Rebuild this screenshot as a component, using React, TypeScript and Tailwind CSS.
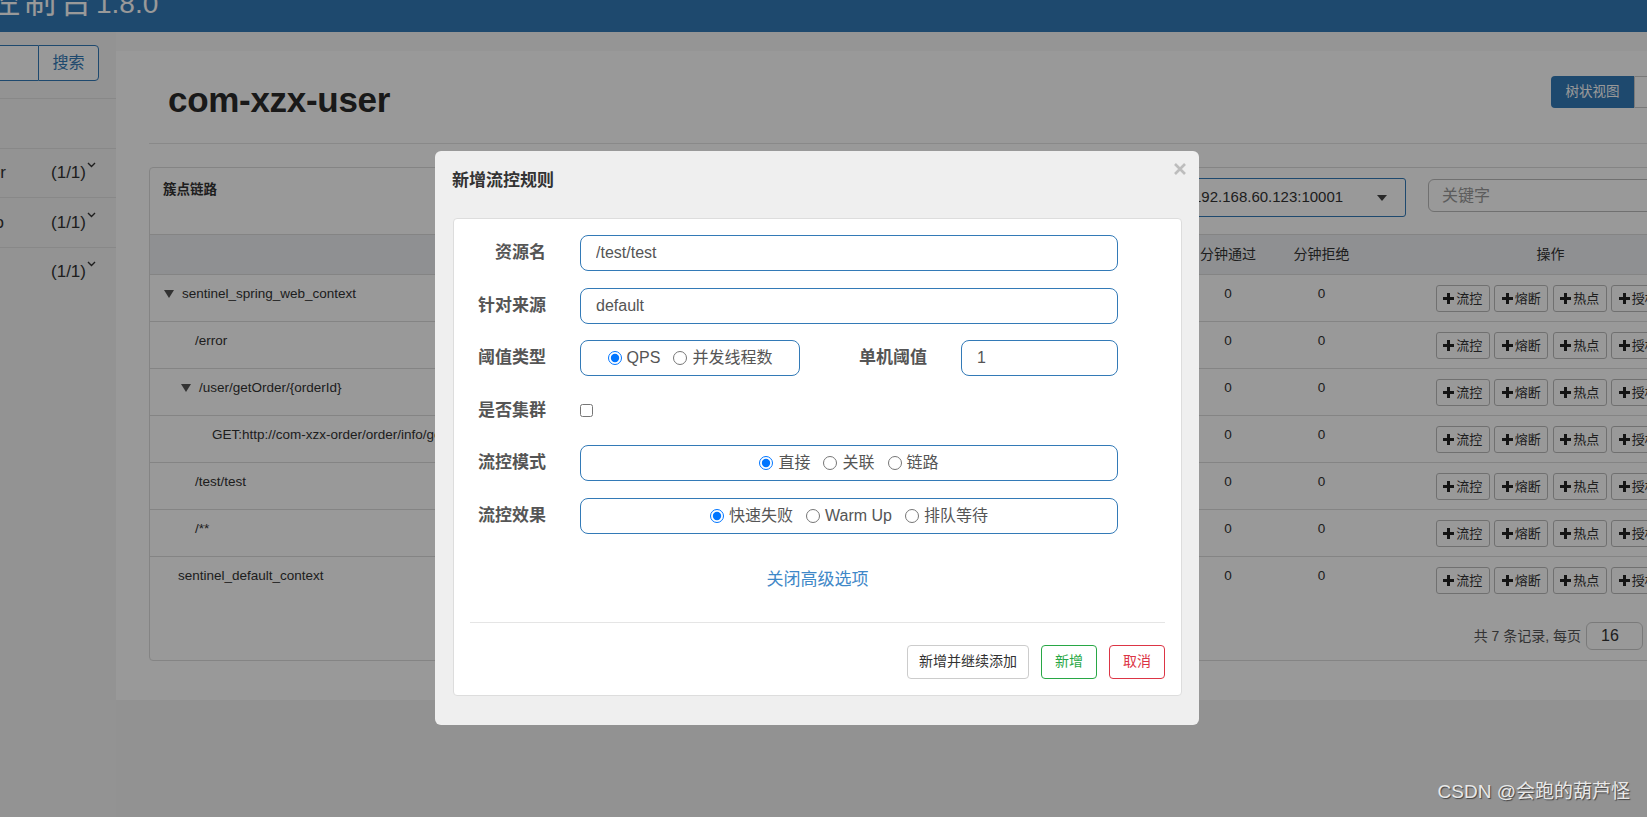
import React from "react";

function PlusIcon() {
  return (
    <svg width="11" height="11" viewBox="0 0 11 11" className="shrink-0">
      <path d="M4 0h3v4h4v3H7v4H4V7H0V4h4z" fill="#222" />
    </svg>
  );
}

function Caret() {
  return (
    <svg width="10" height="6" viewBox="0 0 10 6">
      <path d="M0 0h10L5 6z" fill="#444" />
    </svg>
  );
}

function TreeTri() {
  return (
    <svg width="10" height="8" viewBox="0 0 10 8" className="shrink-0">
      <path d="M0 0h10L5 8z" fill="#555" />
    </svg>
  );
}

function SmallChevron() {
  return (
    <svg width="9" height="6" viewBox="0 0 9 6" className="mt-[2px] ml-[1px] shrink-0">
      <path d="M1 1l3.5 3.5L8 1" fill="none" stroke="#333" strokeWidth="1.4" />
    </svg>
  );
}

function ActionBtn({ label }: { label: string }) {
  return (
    <div className="flex h-[27px] w-[54px] items-center justify-center gap-[2px] rounded-[3px] border border-[#bbb] bg-white text-[13px] text-[#333]">
      <PlusIcon />
      <span>{label}</span>
    </div>
  );
}

const rows = [
  { pad: "pl-[14px]", tri: true, text: "sentinel_spring_web_context" },
  { pad: "pl-[45px]", tri: false, text: "/error" },
  { pad: "pl-[31px]", tri: true, text: "/user/getOrder/{orderId}" },
  { pad: "pl-[62px]", tri: false, text: "GET:http://com-xzx-order/order/info/getOrder" },
  { pad: "pl-[45px]", tri: false, text: "/test/test" },
  { pad: "pl-[45px]", tri: false, text: "/**" },
  { pad: "pl-[28px]", tri: false, text: "sentinel_default_context" },
];

const sideApps = [
  { name: "com-xzx-order", mr: "mr-[45px]" },
  { name: "com-xzx-demo", mr: "mr-[47px]" },
  { name: "com-xzx-pay", mr: "mr-[62px]" },
];

function Radio({ name, label, checked }: { name: string; label: string; checked?: boolean }) {
  return (
    <label className="flex items-center gap-[5px] text-[16px] text-[#555]">
      <input type="radio" name={name} defaultChecked={checked} className="m-0 h-[14px] w-[14px]" />
      <span>{label}</span>
    </label>
  );
}

function FormLabel({ children, w = "w-[92px]" }: { children: React.ReactNode; w?: string }) {
  return <div className={`${w} shrink-0 text-right text-[17px] font-bold text-[#555]`}>{children}</div>;
}

export default function App() {
  return (
    <div className="relative h-[817px] w-[1647px] overflow-hidden bg-[#f3f3f3] font-['Liberation_Sans','Noto_Sans_CJK_SC',sans-serif]">
      {/* header */}
      <div className="flex h-[32px] items-end overflow-hidden bg-[#337ab7]">
        <div className="mb-[14px] ml-[-12px] flex items-baseline leading-none text-white">
          <span className="text-[32px] tracking-[4px]">控制台</span>
          <span className="text-[28px]">1.8.0</span>
        </div>
      </div>

      <div className="flex">
        {/* sidebar */}
        <aside className="h-[785px] w-[116px] shrink-0 overflow-hidden bg-[#f5f5f5]">
          <div className="flex justify-end pr-[17px] pt-[13px]">
            <div className="h-[36px] w-[200px] shrink-0 rounded-l-[4px] border border-r-0 border-[#337ab7] bg-white" />
            <div className="flex h-[36px] w-[61px] shrink-0 items-center justify-center rounded-r-[4px] border border-[#337ab7] bg-white text-[16px] text-[#337ab7]">
              搜索
            </div>
          </div>
          <div className="mt-[17px] h-[49.5px] border-t border-[#e3e3e3]" />
          {sideApps.map((a) => (
            <div key={a.name} className="flex h-[49.5px] items-center justify-end border-t border-[#e3e3e3] pr-[20px] text-[17px] text-[#333]">
              <span className={`shrink-0 whitespace-nowrap ${a.mr}`}>{a.name}</span>
              <span className="flex shrink-0 items-start">
                <span>(1/1)</span>
                <SmallChevron />
              </span>
            </div>
          ))}
        </aside>

        {/* main */}
        <main className="flex w-[1650px] shrink-0 flex-col">
          <div className="h-[19px] bg-[#f8f8f8]" />
          <div className="h-[649px] bg-white pl-[33px]">
            <div className="w-[1585px]">
              <div className="flex items-start justify-between">
                <h1 className="pl-[19px] pt-[29px] text-[35px] font-bold leading-[40px] tracking-[-0.3px] text-[#2a2a2a]">
                  com-xzx-user
                </h1>
                <div className="mr-[17px] mt-[25px] flex">
                  <div className="flex h-[32px] w-[83px] items-center justify-center rounded-l-[4px] bg-[#337ab7] text-[13.5px] text-white">
                    树状视图
                  </div>
                  <div className="flex h-[32px] w-[83px] items-center justify-center rounded-r-[4px] border border-[#ccc] bg-white text-[13.5px] text-[#333]">
                    列表视图
                  </div>
                </div>
              </div>
              <div className="mt-[23px] border-t border-[#e5e5e5]" />

              {/* table panel */}
              <div className="mt-[23px] rounded-[4px] border border-[#ddd]">
                <div className="flex h-[67px] justify-between border-b border-[#ddd] px-[13px]">
                  <div className="pt-[12px] text-[13.5px] font-bold leading-[20px] text-[#333]">簇点链路</div>
                  <div className="flex gap-[22px] pt-[10px]">
                    <div className="flex h-[39px] w-[226px] items-center justify-between rounded-[3px] border border-[#337ab7] pl-[12px] pr-[18px] text-[15px] text-[#333]">
                      <span>192.168.60.123:10001</span>
                      <Caret />
                    </div>
                    <div className="mt-[1px] flex h-[33px] w-[292px] items-center rounded-[6px] border border-[#bbb] px-[13px] text-[16px] text-[#999]">
                      关键字
                    </div>
                  </div>
                </div>

                <div className="grid h-[40px] grid-cols-[1031px_94px_93px_1fr] items-center border-b border-[#ddd] bg-[#eef0f3] text-[14px] text-[#333]">
                  <div />
                  <div className="text-center whitespace-nowrap">分钟通过</div>
                  <div className="text-center whitespace-nowrap">分钟拒绝</div>
                  <div className="text-center">操作</div>
                </div>

                {rows.map((r, i) => (
                  <div
                    key={r.text}
                    className={`grid h-[47px] grid-cols-[1031px_94px_93px_1fr] items-start text-[13.5px] leading-[20px] text-[#333] ${
                      i < rows.length - 1 ? "border-b border-[#ddd]" : ""
                    }`}
                  >
                    <div className={`flex items-center gap-[8px] overflow-hidden whitespace-nowrap pt-[9px] ${r.pad}`}>
                      {r.tri && <TreeTri />}
                      <span>{r.text}</span>
                    </div>
                    <div className="pt-[9px] text-center">0</div>
                    <div className="pt-[9px] text-center">0</div>
                    <div className="flex justify-center gap-[4.5px] pt-[10px]">
                      <ActionBtn label="流控" />
                      <ActionBtn label="熔断" />
                      <ActionBtn label="热点" />
                      <ActionBtn label="授权" />
                    </div>
                  </div>
                ))}

                <div className="flex items-center justify-end pb-[10px] pr-[13px] pt-[18px] text-[14px] text-[#555]">
                  <span>共 7 条记录, 每页</span>
                  <div className="ml-[5px] flex h-[28px] w-[57px] items-center rounded-[6px] border border-[#ccc] bg-white pl-[14px] text-[16px] text-[#333]">
                    16
                  </div>
                  <span className="w-[77px] overflow-hidden whitespace-nowrap pl-[4px]">条记录, 第 1 页</span>
                </div>
              </div>
            </div>
          </div>
        </main>
      </div>

      {/* backdrop */}
      <div className="absolute inset-0 bg-black/40" />

      {/* modal */}
      <div className="absolute left-[435px] top-[151px] w-[764px] rounded-[6px] bg-[#efefef] pb-[29px]">
        <div className="h-[67px] px-[17px] pt-[19px] text-[17px] font-bold leading-[22px] text-[#333]">新增流控规则</div>
        <div className="absolute right-[13px] top-[12px]">
          <svg width="12" height="12" viewBox="0 0 12 12">
            <path d="M1 1L11 11M11 1L1 11" stroke="#bdbdbd" strokeWidth="2.6" />
          </svg>
        </div>

        <div className="ml-[18px] mr-[17px] rounded-[4px] border border-[#ddd] bg-white pb-[16px] pt-[16px]">
          {/* 资源名 */}
          <div className="mb-[16.5px] flex h-[36px] items-center">
            <FormLabel>资源名</FormLabel>
            <input
              readOnly
              defaultValue="/test/test"
              className="ml-[34px] h-[36px] w-[538px] rounded-[8px] border border-[#337ab7] px-[15px] text-[16px] text-[#555] outline-none"
            />
          </div>
          {/* 针对来源 */}
          <div className="mb-[16.5px] flex h-[36px] items-center">
            <FormLabel>针对来源</FormLabel>
            <input
              readOnly
              defaultValue="default"
              className="ml-[34px] h-[36px] w-[538px] rounded-[8px] border border-[#337ab7] px-[15px] text-[16px] text-[#555] outline-none"
            />
          </div>
          {/* 阈值类型 */}
          <div className="mb-[16.5px] flex h-[36px] items-center">
            <FormLabel>阈值类型</FormLabel>
            <div className="ml-[34px] flex h-[36px] w-[220px] items-center justify-center gap-[13px] rounded-[8px] border border-[#337ab7]">
              <Radio name="grade" label="QPS" checked />
              <Radio name="grade" label="并发线程数" />
            </div>
            <FormLabel w="w-[127px]">单机阈值</FormLabel>
            <input
              readOnly
              defaultValue="1"
              className="ml-[34px] h-[36px] w-[157px] rounded-[8px] border border-[#337ab7] px-[15px] text-[16px] text-[#555] outline-none"
            />
          </div>
          {/* 是否集群 */}
          <div className="mb-[16.5px] flex h-[36px] items-center">
            <FormLabel>是否集群</FormLabel>
            <input type="checkbox" className="m-0 ml-[34px] h-[13px] w-[13px]" />
          </div>
          {/* 流控模式 */}
          <div className="mb-[16.5px] flex h-[36px] items-center">
            <FormLabel>流控模式</FormLabel>
            <div className="ml-[34px] flex h-[36px] w-[538px] items-center justify-center gap-[13px] rounded-[8px] border border-[#337ab7]">
              <Radio name="strategy" label="直接" checked />
              <Radio name="strategy" label="关联" />
              <Radio name="strategy" label="链路" />
            </div>
          </div>
          {/* 流控效果 */}
          <div className="flex h-[36px] items-center">
            <FormLabel>流控效果</FormLabel>
            <div className="ml-[34px] flex h-[36px] w-[538px] items-center justify-center gap-[13px] rounded-[8px] border border-[#337ab7]">
              <Radio name="behavior" label="快速失败" checked />
              <Radio name="behavior" label="Warm Up" />
              <Radio name="behavior" label="排队等待" />
            </div>
          </div>

          <div className="mt-[31px] text-center text-[17px] leading-[30px] text-[#3f88c8]">关闭高级选项</div>

          <div className="mx-[16px] mt-[27px] border-t border-[#e5e5e5]" />

          <div className="mx-[16px] mt-[22px] flex justify-end gap-[12px] text-[14px]">
            <div className="flex h-[34px] w-[122px] items-center justify-center rounded-[4px] border border-[#ccc] bg-white text-[#333]">
              新增并继续添加
            </div>
            <div className="flex h-[34px] w-[56px] items-center justify-center rounded-[4px] border border-[#28a745] bg-white text-[#28a745]">
              新增
            </div>
            <div className="flex h-[34px] w-[56px] items-center justify-center rounded-[4px] border border-[#dc3545] bg-white text-[#dc3545]">
              取消
            </div>
          </div>
        </div>
      </div>

      {/* watermark */}
      <div className="absolute bottom-[11px] right-[17px] text-[19px] text-[#e8e8e8] [text-shadow:1px_1px_1px_rgba(0,0,0,0.55)]">
        CSDN @会跑的葫芦怪
      </div>
    </div>
  );
}
